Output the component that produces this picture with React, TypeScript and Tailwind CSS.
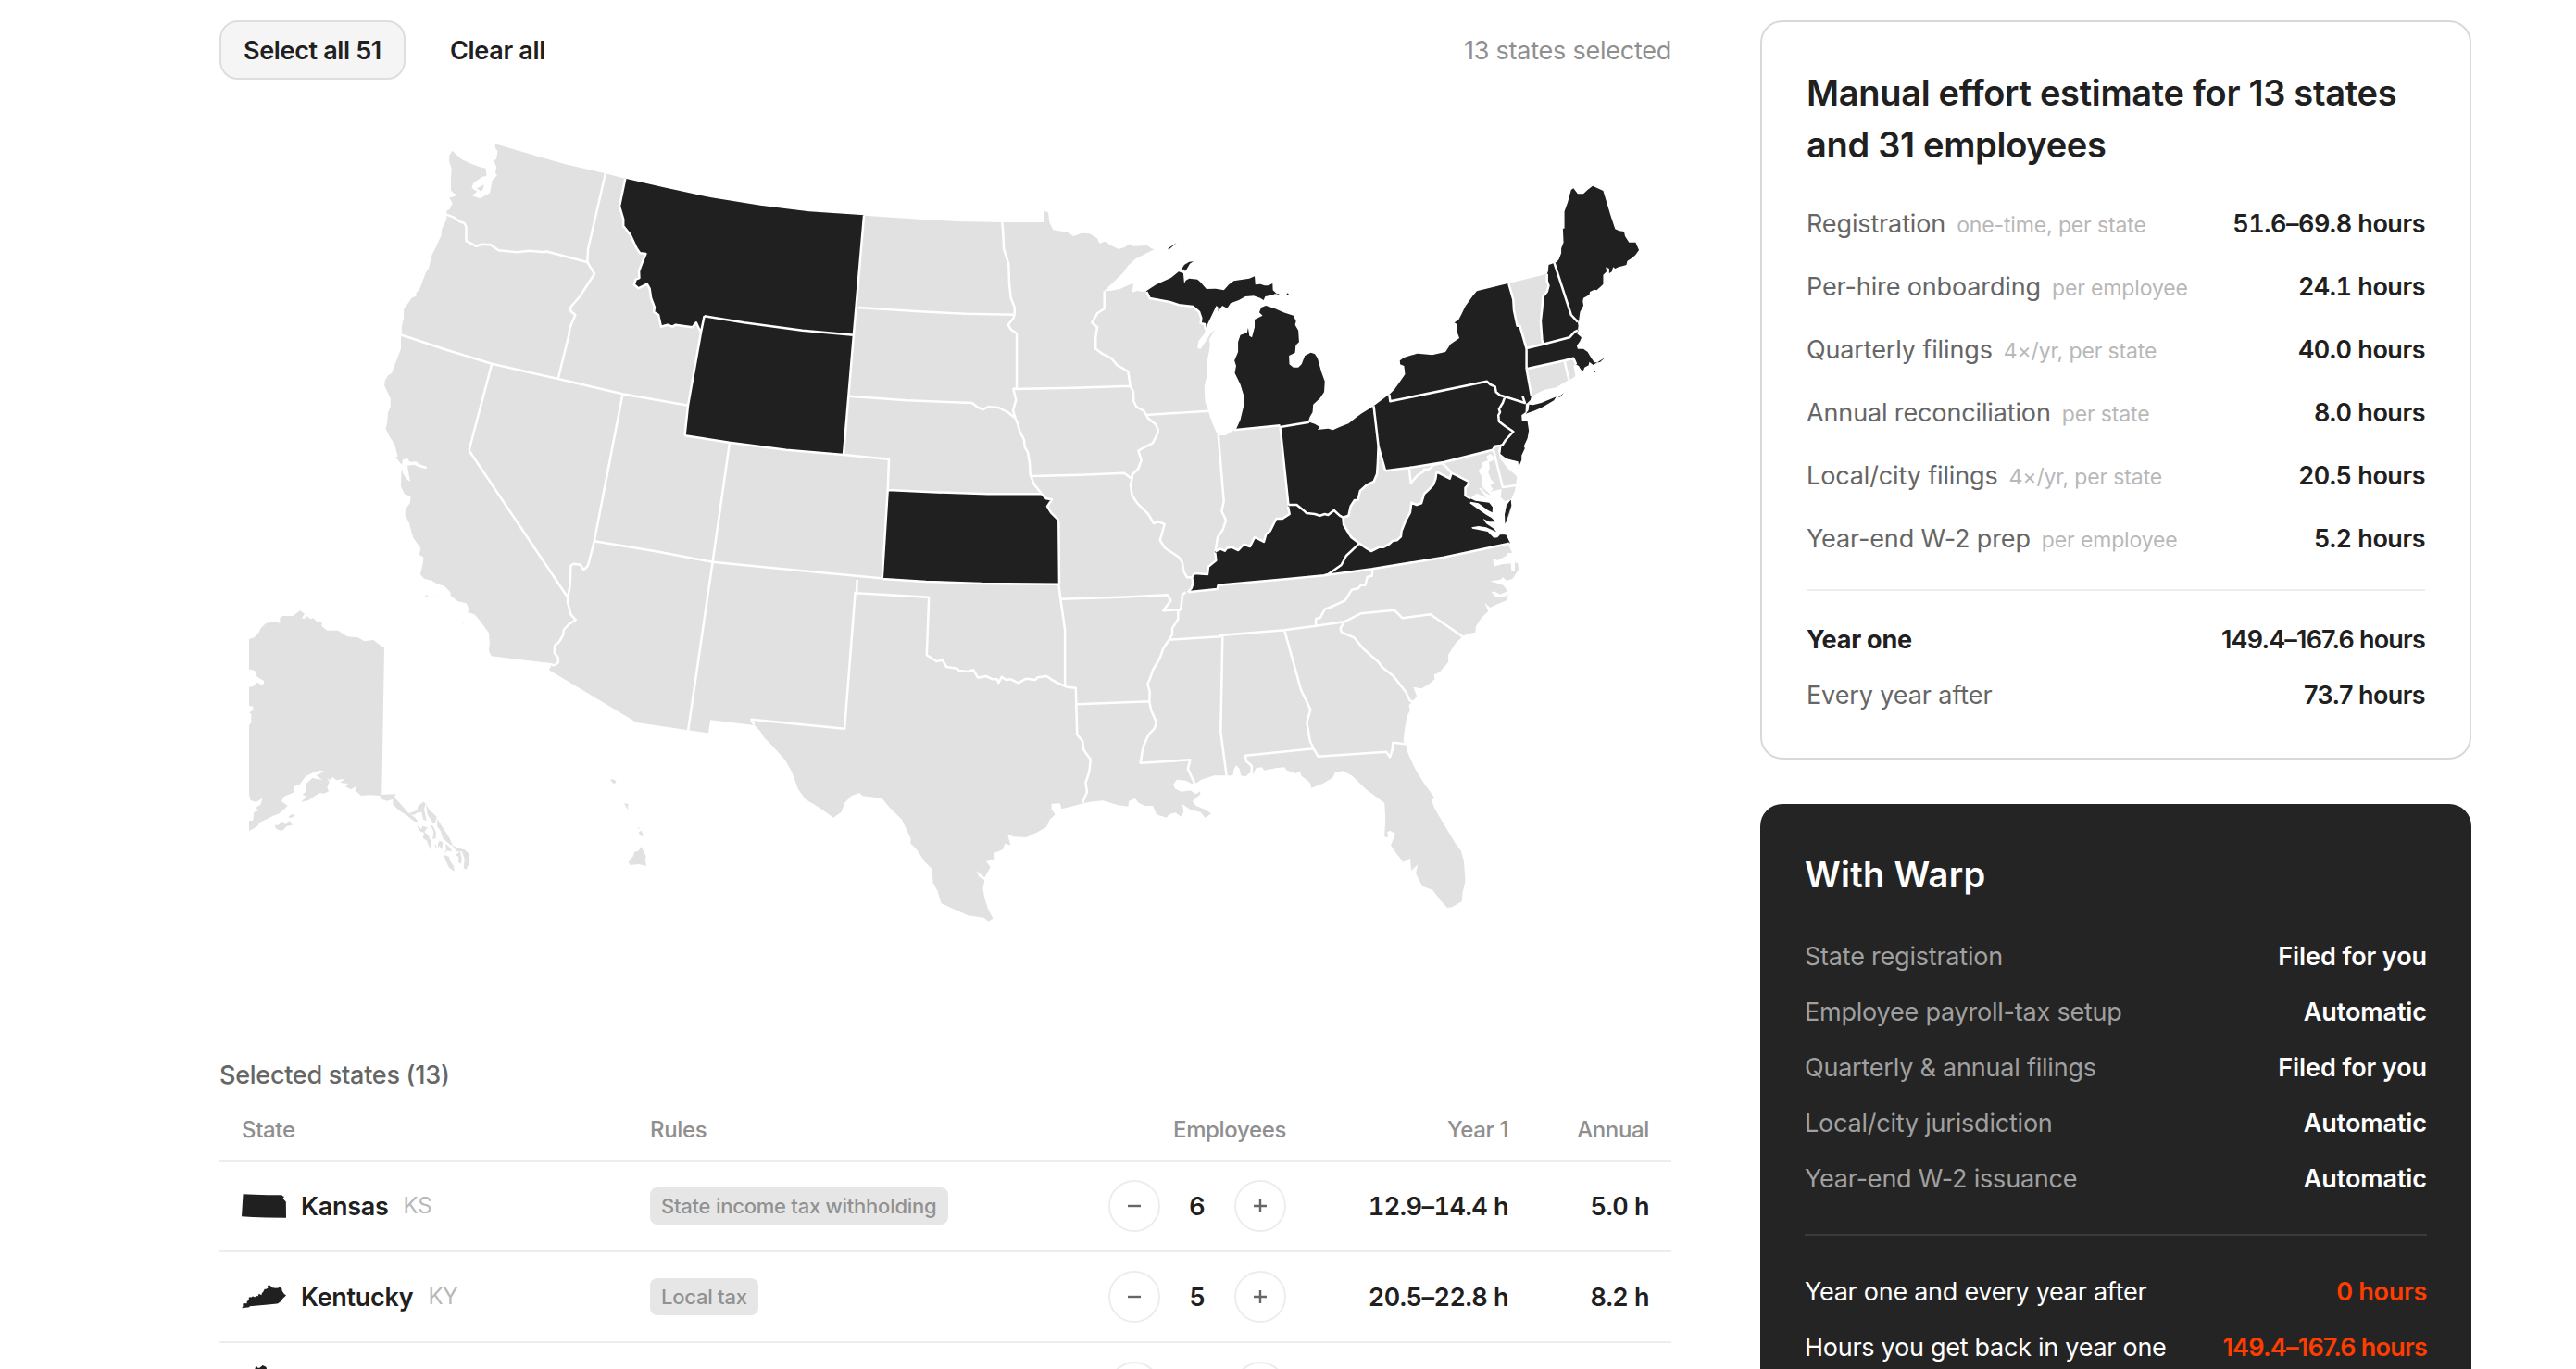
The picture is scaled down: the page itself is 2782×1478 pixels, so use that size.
import React from 'react'
import clsx from 'clsx'

type SheetId = 'nw' | 'mid' | 'ne' | 'sw' | 'se' | 'ak' | 'bay' | 'rio'
type Arc = [SheetId, string]
type Point = [number, number]

// Each sheet is a quantised grid: [x origin, y origin, x scale, y scale]
const SHEETS: Record<SheetId, [number, number, number, number]> = {
  nw: [400, 140, 2.851, 3],
  mid: [900, 200, 3, 3],
  ne: [1220, 180, 2.8, 3],
  sw: [400, 400, 2.8, 3],
  se: [900, 600, 2.063, 3],
  ak: [230, 640, 3, 3],
  bay: [1480, 440, 3, 3],
  rio: [0, 0, 1, 1],
}

const ARCS: Record<string, Arc> = {
  // coast, counter-clockwise from Cape Flattery
  waCoast: ['nw', '252,68 243,84 243,104 250,125 248,160 248,196 255,204 268,213 252,218 243,220 253,238 244,258 236,262 234,270'],
  orCoast: ['nw', '235,288 228,305 220,322 218,343 203,378 190,405 180,448 170,465 153,512 140,532 143,538 127,545 103,582 103,610 96,640 97,665'],
  caNorth: ['nw', '94,675 94,710 80,748 66,788 55,795 45,812 43,828 62,870 62,898 54,918 52,948 47,968 60,995 74,1018 84,1058'],
  caSouth: ['sw', '76,280 98,310 94,330 92,375 103,400 122,408 120,428 106,450 105,468 118,495 124,522 130,542 152,575 148,597 161,605 158,630 151,660 162,674 185,680 205,693 222,697 242,718 243,730 265,748 290,754 297,770 295,784 315,790 335,815 358,850 361,885 358,907 366,925 450,936 552,949'],
  azSouth: ['sw', '548,955 540,970 805,1140 960,1165 1022,1174 1028,1132 1155,1148 1160,1147 1180,1170 1190,1188 1215,1215 1253,1260'],
  bigBend: ['rio', '855,833 862,852 870,863 885,872'],
  txCoast: ['se', '0,848 18,830 25,800 40,778 58,768 65,778 108,785 125,815 153,855 172,915 172,932 185,950 203,990 220,1015 222,1060 232,1085 240,1125 270,1145 300,1165 335,1172 345,1184 356,1175 345,1145 337,1110 333,1078 337,1050 325,1040 318,1020 337,1042 350,1008 340,990 352,985 360,982 358,962 372,955 378,950 382,932 395,938 388,902 402,910 430,912 455,895 475,878 482,855 494,838 486,822 486,803 505,802 508,820 530,812 553,803'],
  laCoast: ['se', '570,797 600,793 635,808 657,812 658,795 672,785 680,800 695,810 712,810 720,838 742,848 748,838 762,832 775,845 780,830 778,805 795,822 818,830 828,848 842,835 828,822 808,810 800,795 818,772 815,755 805,740'],
  msAlCoast: ['se', '820,725 848,712 872,712 890,712 893,690 898,680 905,690 908,712 918,715 926,705 932,700'],
  flCoast: ['se', '935,708 942,688 955,685 960,695 985,688 1005,685 1010,695 1030,705 1040,698 1042,712 1062,735 1065,752 1090,738 1112,720 1118,702 1135,697 1155,712 1188,758 1228,800 1230,850 1228,910 1236,912 1234,895 1240,890 1252,900 1242,938 1255,965 1270,992 1285,980 1288,1020 1302,1000 1298,1030 1312,1070 1335,1082 1352,1115 1368,1140 1378,1138 1400,1120 1402,1090 1408,1055 1405,990 1398,955 1385,930 1340,820 1332,790 1340,785 1315,735 1298,695 1280,640 1275,610'],
  gaScCoast: ['se', '1270,600 1273,560 1278,520 1285,500 1282,485 1290,472 1300,455 1292,425 1310,430 1325,418 1340,400 1338,385 1350,378 1370,345 1370,320 1388,280 1402,262'],
  ncCoast: ['bay', '297,740 320,732 340,728 342,708 360,680 382,660 370,632 388,648 415,635 440,625 447,605 430,615 405,612 392,598 400,595 420,605 445,595 430,575 388,562 420,558 430,550 440,560 460,555 480,525 478,505 468,502 468,528 457,528 455,505 425,508 400,515 397,488 412,495 440,480 445,472 460,470 452,455 448,444'],
  delmarva: ['bay', '452,438 440,413 436,377 452,345 457,318 455,300 468,270 472,245 480,190'],
  njCoast: ['ne', '1177,970 1185,950 1185,935 1195,912 1192,905 1203,880 1207,855 1203,825 1186,822 1185,805 1197,795 1198,770'],
  nyHarbor: ['ne', '1200,768 1212,755 1215,742'],
  ctRiCoast: ['ne', '1218,743 1225,738 1255,722 1290,715 1325,692 1340,685 1348,678 1345,660 1342,645'],
  maCoast: ['ne', '1350,640 1358,645 1365,658 1372,660 1375,650 1388,643 1390,632 1402,642 1420,630 1438,617 1422,633 1405,634 1395,618 1385,600 1372,590 1355,590 1352,580 1362,565 1366,553 1352,540 1358,528'],
  nhCoast: ['ne', '1355,530 1357,515 1355,503'],
  meCoast: ['ne', '1358,500 1362,470 1372,450 1370,435 1372,425 1390,415 1392,405 1405,398 1412,400 1425,388 1432,380 1432,350 1442,340 1440,325 1450,330 1450,345 1458,340 1462,325 1468,330 1478,325 1490,322 1502,318 1505,305 1520,295 1530,285 1540,270 1530,245 1510,245 1498,225 1495,210 1480,208 1468,202 1455,160 1432,78 1400,62 1385,75 1372,88 1355,88 1342,70 1335,75 1325,115 1315,145 1315,200 1310,200 1312,245 1305,265 1305,280 1298,300 1290,310 1283,308'],
  nhTop: ['ne', '1283,312 1275,315 1267,318 1265,340'],
  vtTop: ['ne', '1262,347 1146,378'],
  nyCoast: ['ne', '1144,378 1050,403 1038,418 1015,452 1005,475 995,495 982,505 990,510 990,535 997,555 970,575 955,600 915,610 870,605 830,618 817,628 818,640 830,645 833,672 815,700 800,722 785,738'],
  paCoast: ['ne', '780,741 740,773'],
  ohCoast: ['ne', '735,777 700,800 685,812 662,832 635,843 615,853 600,848 568,852 575,843 560,833 543,827'],
  miLower: ['ne', '541,822 545,810 553,795 555,770 575,750 588,730 590,695 580,665 568,620 560,607 548,602 530,612 520,640 510,650 495,650 483,640 482,612 500,602 502,578 512,568 510,530 500,512 503,500 495,482 465,472 440,460 412,450 398,456 392,472 402,482 378,495 378,520 370,553 362,548 358,522 355,538 335,545 328,568 328,600 317,628 322,645 318,668 335,705 345,740 345,775 335,820 322,850'],
  inCoast: ['ne', '312,855 290,870 272,870 262,860 250,830 240,800'],
  wiMichigan: ['ne', '238,790 228,760 226,710 235,670 232,640 240,600 243,575 240,560 258,528 245,540 215,590 205,588 208,565 228,538 228,525'],
  miUpper: ['ne', '230,522 262,450 268,455 268,468 280,450 295,458 305,442 330,432 350,420 375,418 395,425 405,432 410,420 435,415 447,414 433,400 432,378 420,385 408,385 395,380 380,382 378,355 362,362 315,370 300,382 285,400 260,395 232,396 215,375 205,365 180,362 170,368 165,378 162,345 148,340 125,360 80,382 65,392 50,403'],
  wiSuperior: ['mid', '1005,345 985,342 968,347 972,318 960,322 930,335 900,342 878,342'],
  mnNorth: ['mid', '885,335 940,282 955,260 980,238 1040,207 1030,205 1018,195 970,197 960,190 945,200 925,207 900,195 880,182 862,188 855,172 830,157 805,155 778,165 760,153 712,145 700,120 696,88 684,84 684,120'],
  ndNorth: ['mid', '547,120 400,117 280,110 100,98'],
  mtNorth: ['nw', '1520,277 1350,265 1200,245 1050,220 900,186 785,158'],
  waNorth: ['nw', '724,142 600,112 500,82 384,46'],
  puget: ['nw', '385,60 392,70 388,95 380,100 388,120 385,140 390,148 375,165 368,205 350,215 338,223 312,213 330,200 320,195 312,188 318,172 345,152 358,150 355,125 335,120 305,108 280,95'],

  // shared borders
  waOr: ['nw', '230,273 240,277 255,283 275,298 290,303 295,315 295,360 325,377 345,371 370,373 395,391 450,397 490,392 535,397 540,394 668,429'],
  waId: ['nw', '724,142 670,388 668,429'],
  orId: ['nw', '668,429 690,467 645,540 616,575 617,588 631,600 615,640 610,670 578,807'],
  north42: ['nw', '97,665 230,712 374,758 578,807 776,856 978,893'],
  nvCaNorth: ['nw', '374,758 304,1038'],
  nvCaSouth: ['sw', '299,260 597,735'],
  nvUt: ['sw', '763,76 677,553 660,625 655,637 645,645 640,638 635,629 615,626 606,632 605,665 603,700 597,735'],
  caAz: ['sw', '597,735 596,750 606,790 621,808 600,822 585,840 582,858 570,880 558,890 556,915 567,928 568,945 560,953 548,955'],
  wyWest: ['nw', '1028,604 1018,655 978,893 968,991'],
  mtId: ['nw', '785,158 767,248 779,290 779,312 800,340 820,385 830,400 848,402 835,435 827,458 828,480 817,485 812,502 825,514 852,500 860,515 864,545 875,575 873,590 887,600 895,638 915,632 930,638 940,632 970,637 992,640 1003,625 1015,652 1018,655'],
  mtWy: ['nw', '1028,604 1150,625 1330,650 1488,665'],
  mtEast: ['nw', '1520,277 1488,665'],
  wyEast: ['nw', '1488,665 1457,1053'],
  wySouth: ['nw', '968,991 1105,1013 1280,1037 1457,1053'],
  coNe: ['mid', '33,873 180,887 176,987'],
  neKs: ['mid', '176,987 320,994 500,1000 675,1000'],
  coKs: ['mid', '176,987 158,1275'],
  utCo: ['sw', '1086,235 1035,620 961,1165'],
  north37: ['sw', '677,553 860,585 1035,620 1190,637 1350,653 1545,673'],
  ksSouth: ['mid', '158,1275 300,1284 480,1290 732,1292'],
  nmEast: ['sw', '1472,678 1470,720 1466,720 1434,1160 1152,1130 1160,1147'],
  okTx: ['se', '49,121 213,134 208,322 230,342 243,338 252,360 275,365 280,372 300,375 312,370 322,395 340,390 355,400 365,400 368,412 375,392 385,402 395,400 412,412 430,398 450,402 455,394 475,390 485,400 500,412 520,425 540,428 543,580 555,600 558,630 573,660 570,700 562,735 565,765 555,800'],
  okAr: ['se', '502,92 506,140 516,240 516,418'],
  moAr: ['se', '506,140 640,134 745,127 752,145 735,178 774,174'],
  arLa: ['se', '543,481 704,472'],
  ksMoRiver: ['mid', '675,1000 690,1015 708,1018 693,1040 705,1060 730,1085'],
  ksMo: ['mid', '730,1085 732,1292'],
  ndSd: ['mid', '80,396 280,409 430,416 587,419'],
  ndMn: ['mid', '547,120 550,155 552,205 568,255 570,320 575,365 587,395 587,419'],
  sdMn: ['mid', '587,419 582,432 566,452 575,467 594,480 594,658'],
  sdNe: ['mid', '50,683 240,697 450,705 465,718 485,726 500,718 535,720 565,735 590,755'],
  sdIa: ['mid', '594,658 583,660 592,695 582,730 590,755'],
  mnIa: ['mid', '583,660 780,656 962,650'],
  neIa: ['mid', '590,755 598,775 603,795 618,825 620,848 630,865 636,900 638,938 650,968 675,1000'],
  iaMo: ['mid', '640,942 800,938 942,932 968,952'],
  mnWi: ['mid', '878,342 878,400 855,415 838,445 855,460 850,490 850,530 875,548 900,560 920,583 955,603 962,650'],
  iaIl: ['mid', '962,650 972,670 973,700 982,718 1005,730 1020,755 1045,775 1052,792 1050,805 1035,835 1005,850 988,860 998,890 988,918 968,938 968,952'],
  wiIl: ['mid', '1012,744 1215,731'],
  moIl: ['mid', '968,952 962,970 968,1005 985,1030 1020,1065 1038,1095 1055,1090 1073,1098 1058,1150 1075,1175 1120,1205 1130,1220 1135,1250 1145,1270 1162,1270'],
  ilKy: ['mid', '1162,1270 1170,1257 1212,1260 1215,1235 1240,1215 1237,1190'],
  ilIn: ['mid', '1247,805 1265,1025 1258,1055 1272,1085 1262,1115 1245,1140 1238,1185'],
  kyIn: ['mid', '1238,1185 1255,1178 1268,1184 1275,1175 1290,1172 1312,1182 1330,1163 1350,1170 1365,1140 1395,1155 1402,1130 1415,1120 1435,1080 1455,1080 1478,1065 1473,1040'],
  kyOh: ['ne', '480,1095 505,1095 525,1112 535,1122 560,1125 575,1130 590,1125 600,1128 618,1113 635,1130 645,1136'],
  inOh: ['ne', '455,840 480,1095'],
  miIn: ['ne', '315,853 455,838'],
  ohNorth: ['ne', '543,827 455,843'],
  miWi: ['mid', '1015,345 1025,366 1090,378 1120,388 1165,393 1185,410 1192,430 1190,447 1203,450 1205,465'],
  kyWv: ['ne', '645,1136 647,1160 670,1200 695,1220'],
  kyVa: ['ne', '695,1220 655,1260 640,1290 600,1320 588,1324'],
  kyTn: ['ne', '588,1324 480,1335 268,1355 265,1368 175,1378'],
  kyMo: ['mid', '1162,1270 1165,1290 1160,1305 1148,1318'],
  tnVa: ['ne', '588,1324 733,1303 950,1265 1148,1220'],
  ohWv: ['ne', '645,1136 662,1130 668,1100 680,1080 690,1080 697,1050 718,1030 738,1020 748,995 750,960 752,905'],
  paWest: ['ne', '738,775 752,905 773,985'],
  paSouth: ['ne', '773,985 845,975 950,957 1098,917'],
  paDe: ['ne', '1098,917 1105,905 1122,903'],
  deMd: ['ne', '1100,917 1128,1038 1168,1032'],
  mdWv: ['ne', '845,975 850,1025 870,1000 888,988 890,980 905,980 920,965 945,960 960,975 972,990'],
  vaWv: ['ne', '695,1220 715,1235 730,1245 755,1232 768,1232 785,1222 795,1212 808,1210 820,1198 822,1180 835,1145 848,1120 852,1088 868,1095 882,1090 890,1060 905,1045 918,1030 925,1010 928,988'],
  mdVa: ['ne', '928,988 968,1010 973,992 990,1000 1025,1020 1022,1032 1015,1040 1015,1065 1030,1075'],
  vaShore: ['bay', '308,292 330,296 385,306 396,322 400,360 412,405 440,413 452,438'],
  paNy: ['ne', '785,738 788,760 1080,695 1090,705 1105,712 1108,730 1120,740 1135,745'],
  nyNj: ['ne', '1135,745 1195,765 1188,742'],
  paNj: ['ne', '1135,745 1128,765 1117,785 1120,795 1115,805 1117,825 1135,840 1160,858 1137,885 1128,900 1122,903'],
  njBay: ['ne', '1175,955 1150,950 1130,942 1120,930 1122,903'],
  nyVt: ['ne', '1146,378 1160,430 1162,465 1172,515 1180,515 1200,590'],
  nyMa: ['ne', '1200,590 1200,655'],
  nyCt: ['ne', '1200,655 1215,742'],
  maSouth: ['ne', '1200,655 1315,628 1342,620 1350,640'],
  vtMa: ['ne', '1200,588 1250,575'],
  nhMa: ['ne', '1250,575 1330,553 1345,535 1355,530'],
  vtNh: ['ne', '1262,347 1262,370 1267,385 1262,405 1250,420 1247,460 1243,500 1247,560 1250,575'],
  nhMe: ['ne', '1283,308 1335,480 1355,503'],
  ctRi: ['ne', '1315,628 1328,690'],
  mississippi: ['se', '785,118 778,125 774,174 768,180 768,205 755,235 755,255 748,272 735,300 728,330 712,370 705,400 700,415 705,440 704,472 708,500 720,540 715,560 702,580 690,620 684,671 795,661 790,690 805,738'],
  tnSouth: ['se', '748,272 862,262 862,258 1005,241 1075,227 1138,214'],
  tnNc: ['se', '1202,43 1200,65 1190,68 1185,95 1175,95 1170,105 1155,110 1140,145 1110,165 1095,173 1085,200 1075,205 1075,227'],
  msAl: ['se', '867,262 863,570 876,712'],
  alGa: ['se', '1005,241 1042,435 1063,498 1055,540 1062,600 1070,625'],
  alFl: ['se', '1070,625 918,647 920,665 932,680 932,705'],
  gaFl: ['se', '1070,625 1080,650 1232,635 1240,652 1245,630 1247,605 1275,610'],
  gaSc: ['se', '1138,214 1130,235 1132,247 1160,265 1180,300 1215,345 1222,360 1248,390 1275,440 1285,470 1292,472'],
  ncSc: ['se', '1138,214 1175,187 1250,176 1268,202 1330,190 1402,262'],

  // islands
  isleRoyale: ['ne', '115,268 120,262 142,246 120,267'],
  keweenaw: ['ne', '155,335 165,318 180,308 193,307 182,314 172,333 168,338 164,332'],
  drummond: ['ne', '472,416 478,409 482,415'],
  sault: ['ne', '435,412 450,412 456,416 440,417'],
  longIsland: ['ne', '1198,800 1206,788 1208,770 1220,772 1245,765 1290,745 1283,757 1250,778 1225,790 1205,797'],
  montauk: ['ne', '1295,748 1313,733 1303,745'],
  nantucket: ['ne', '1403,664 1408,661 1408,666'],
  vaEastern: ['bay', '455,300 457,318 448,345 440,370 436,377 435,345 440,318 448,302'],
  kitsap: ['nw', '328,190 350,178 346,195 340,200'],
  chan1: ['sw', '166,727 174,729 174,733 168,732'],
  chan2: ['sw', '192,730 196,731 193,734'],
  chan3: ['sw', '279,820 283,821 282,824'],
  alaska: ['ak', '117,150 133,145 148,130 155,115 172,98 210,92 213,98 220,96 215,85 225,75 260,75 282,57 297,68 288,82 296,84 305,75 315,85 325,82 335,92 353,95 352,108 370,122 405,122 420,132 435,142 470,145 490,157 520,153 535,165 555,178 547,653 540,657 510,655 480,657 460,640 467,625 447,637 430,628 437,618 412,615 427,602 400,607 388,597 378,607 370,600 377,613 370,630 375,643 360,650 345,648 310,672 285,678 303,660 290,653 300,645 300,620 322,600 355,607 335,592 360,578 345,575 325,582 300,595 280,622 262,627 265,645 230,660 222,675 242,690 215,715 195,722 150,745 145,755 117,772 117,738 130,738 133,710 150,705 138,697 155,685 160,665 140,678 122,672 117,655 117,430 124,420 124,392 117,388 130,380 130,368 117,365 117,305 130,303 145,290 155,298 165,295 165,285 148,275 137,265 142,257 130,250 117,248'],
  ak1: ['ak', '540,655 555,653 592,652 588,664 600,675 632,712 655,728 665,742 652,740 630,722 600,703 583,685 583,668 565,674 545,668'],
  ak2: ['ak', '635,715 660,705 665,690 682,677 689,682 684,700 692,738 682,735 676,710 662,712 650,720'],
  ak3: ['ak', '690,684 700,702 725,725 720,745 712,745 695,718'],
  ak4: ['ak', '727,733 765,792 778,820 768,815 745,795 738,772 726,755'],
  ak5: ['ak', '660,752 675,765 678,755 695,760 685,775 698,785 708,810 706,835 692,802 680,795 684,778 668,770'],
  ak6: ['ak', '704,748 715,758 722,775 722,795 712,798 715,775'],
  ak7: ['ak', '735,803 745,808 742,832 733,820 728,828 730,810'],
  ak8: ['ak', '752,812 768,825 775,838 758,835 750,848 756,828'],
  ak9: ['ak', '775,818 800,828 815,832 830,845 832,872 820,897 812,890 815,862 806,838 790,838'],
  ak10: ['ak', '748,848 765,855 768,868 780,885 782,902 765,890 755,870'],
  ak11: ['ak', '786,850 800,838 806,858 804,878 795,872 796,855'],
  ak12: ['ak', '718,812 726,825 720,823'],
  kodiak1: ['ak', '200,752 212,752 225,740 235,750 248,738 258,752 240,755 225,770 212,768 203,762'],
  kodiak2: ['ak', '243,726 255,718 267,720 254,729'],
  hi1: ['ak', '1287,604 1300,605 1307,612 1300,619 1292,613'],
  hi2: ['ak', '1332,682 1346,684 1344,695 1346,706 1338,693'],
  hi3: ['ak', '1380,775 1388,770 1396,788 1382,786'],
  hi4: ['ak', '1376,758 1382,764 1378,766'],
  hi5: ['ak', '1386,822 1397,840 1403,855 1400,865 1404,885 1380,879 1352,882 1346,872 1362,852 1365,840 1380,835'],

  // inlets
  chesapeake: ['bay', '440,411 420,412 412,421 400,422 380,402 350,396 330,392 328,388 350,384 375,388 408,403 400,392 375,376 365,360 385,370 405,370 392,357 375,347 345,326 322,310 325,305 350,310 380,332 395,340 396,322 385,308 340,302 325,295 330,288 345,278 376,292 352,262 358,260 372,276 390,285 385,278 366,262 360,245 362,225 350,205 362,190 362,178 380,172 376,158 388,150 398,158 398,170 383,178 387,195 382,210 390,232 402,245 388,252 398,265 388,272 425,264 422,290 435,303 455,298 440,318 435,345 436,377 442,400'],
  delawareBay: ['bay', '420,125 425,120 421,150 440,165 476,175 479,190 480,240 472,220 445,197 420,165 414,140'],
  sfBay: ['nw', '96,1088 100,1068 115,1066 122,1076 140,1075 152,1084 175,1092 172,1099 150,1093 135,1085 114,1088 118,1115 123,1140 110,1130 100,1112'],
  pontchartrain: ['se', '757,742 765,725 785,728 798,738 812,735 822,758 808,772 795,760 775,764 762,755'],
  mobileBay: ['se', '890,714 893,690 898,678 905,692 908,716'],
  canaveral: ['se', '1334,790 1345,800 1347,812 1340,806'],
}

const COAST = [
  'waCoast', 'orCoast', 'caNorth', 'caSouth', 'azSouth', 'bigBend', 'txCoast', 'laCoast', 'msAlCoast', 'flCoast',
  'gaScCoast', 'ncCoast', 'delmarva', 'njCoast', 'nyHarbor', 'ctRiCoast', 'maCoast', 'nhCoast', 'meCoast', 'nhTop',
  'vtTop', 'nyCoast', 'paCoast', 'ohCoast', 'miLower', 'inCoast', 'wiMichigan', 'miUpper', 'wiSuperior', 'mnNorth',
  'ndNorth', 'mtNorth', 'waNorth', 'puget',
]

const LAND = [
  COAST, ['alaska'], ['ak1'], ['ak2'], ['ak3'], ['ak4'], ['ak5'], ['ak6'], ['ak7'], ['ak8'], ['ak9'], ['ak10'],
  ['ak11'], ['ak12'], ['kodiak1'], ['kodiak2'], ['hi1'], ['hi2'], ['hi3'], ['hi4'], ['hi5'], ['kitsap'], ['chan1'],
  ['chan2'], ['chan3'],
]

const WATER = ['chesapeake', 'delawareBay', 'sfBay', 'pontchartrain', 'mobileBay', 'canaveral']

// A leading "-" walks the arc backwards
const SELECTED: Record<string, string[][]> = {
  KS: [['neKs', 'ksMoRiver', 'ksMo', '-ksSouth', '-coKs']],
  KY: [['kyOh', 'kyWv', 'kyVa', 'kyTn', '-kyMo', 'ilKy', 'kyIn']],
  ME: [['meCoast', 'nhMe']],
  MA: [['maCoast', '-nhMa', '-vtMa', 'nyMa', 'maSouth'], ['nantucket']],
  MI: [['miLower', 'miIn', '-ohNorth'], ['miUpper', 'miWi'], ['isleRoyale'], ['keweenaw'], ['drummond'], ['sault']],
  MT: [['mtNorth', 'mtId', 'mtWy', '-mtEast']],
  NH: [['nhCoast', '-nhMe', 'nhTop', 'vtNh', 'nhMa']],
  NJ: [['nyNj', '-njCoast', 'njBay', '-paNj']],
  NY: [['nyCoast', 'paNy', 'nyNj', 'nyHarbor', '-nyCt', '-nyMa', '-nyVt'], ['longIsland'], ['montauk']],
  OH: [['ohCoast', 'ohNorth', 'inOh', 'kyOh', 'ohWv']],
  PA: [['paCoast', 'paWest', 'paSouth', 'paDe', '-paNj', '-paNy']],
  VA: [['mdVa', 'vaShore', '-tnVa', '-kyVa', 'vaWv'], ['vaEastern']],
  WY: [['mtWy', 'wyEast', '-wySouth', '-wyWest']],
}

const BORDERS = [
  'waOr', 'waId', 'orId', 'north42', 'nvCaNorth', 'nvCaSouth', 'nvUt', 'caAz', 'wyWest', 'mtId', 'mtWy', 'mtEast',
  'wyEast', 'wySouth', 'coNe', 'neKs', 'coKs', 'utCo', 'north37', 'ksSouth', 'nmEast', 'okTx', 'okAr', 'moAr', 'arLa',
  'ksMoRiver', 'ksMo', 'ndSd', 'ndMn', 'sdMn', 'sdNe', 'sdIa', 'mnIa', 'neIa', 'iaMo', 'mnWi', 'iaIl', 'wiIl', 'moIl',
  'ilKy', 'ilIn', 'kyIn', 'kyOh', 'inOh', 'miIn', 'ohNorth', 'miWi', 'kyWv', 'kyVa', 'kyTn', 'kyMo', 'tnVa', 'ohWv',
  'paWest', 'paSouth', 'paDe', 'deMd', 'mdWv', 'vaWv', 'mdVa', 'paNy', 'nyNj', 'paNj', 'nyVt', 'nyMa', 'nyCt',
  'maSouth', 'vtMa', 'nhMa', 'vtNh', 'nhMe', 'ctRi', 'mississippi', 'tnSouth', 'tnNc', 'msAl', 'alGa', 'alFl', 'gaFl',
  'gaSc', 'ncSc',
]

const arcPoints = (ref: string): Point[] => {
  const reversed = ref.startsWith('-')
  const [sheet, raw] = ARCS[reversed ? ref.slice(1) : ref]
  const [ox, oy, sx, sy] = SHEETS[sheet]
  const points = raw.split(' ').map((pair): Point => {
    const [x, y] = pair.split(',').map(Number)
    return [ox + x / sx, oy + y / sy]
  })
  return reversed ? points.reverse() : points
}

const line = (points: Point[]) => 'M' + points.map(([x, y]) => `${x.toFixed(1)} ${y.toFixed(1)}`).join('L')
const shape = (rings: string[][]) => rings.map((ring) => line(ring.flatMap(arcPoints)) + 'Z').join('')

const UsMap: React.FC = () => (
  <svg viewBox="237 120 1568 900" className="mt-[34px] block h-[900px] w-[1568px]">
    <path d={shape(LAND)} className="fill-[#e1e1e1]" />
    {Object.keys(SELECTED).map((code) => (
      <path key={code} d={shape(SELECTED[code])} className="fill-[#202020]" />
    ))}
    <path d={shape(WATER.map((name) => [name]))} className="fill-white" />
    <path
      d={BORDERS.map((name) => line(arcPoints(name))).join('')}
      className="fill-none stroke-white stroke-[2.5]"
      strokeLinejoin="round"
    />
  </svg>
)

const StateIcon: React.FC<{ code: string }> = ({ code }) => {
  const points = SELECTED[code].flatMap((ring) => ring.flatMap(arcPoints))
  const xs = points.map((p) => p[0])
  const ys = points.map((p) => p[1])
  const x = Math.min(...xs)
  const y = Math.min(...ys)

  return (
    <svg viewBox={`${x} ${y} ${Math.max(...xs) - x} ${Math.max(...ys) - y}`} className="size-12 shrink-0">
      <path d={shape(SELECTED[code])} className="fill-[#202020]" />
    </svg>
  )
}

const Stepper: React.FC<{ value?: number }> = ({ value }) => {
  const button = 'flex size-14 items-center justify-center rounded-full border-2 border-[#ededed]'

  return (
    <div className="flex items-center justify-end">
      <button className={button} aria-label="Remove employee">
        <svg viewBox="0 0 14 14" className="size-3.5 stroke-[#666] stroke-[2.4]">
          <path d="M0 7h14" />
        </svg>
      </button>
      <span className="w-20 pt-0.5 text-center text-[27px] font-semibold">{value}</span>
      <button className={button} aria-label="Add employee">
        <svg viewBox="0 0 14 14" className="size-3.5 stroke-[#666] stroke-[2.4]">
          <path d="M0 7h14M7 0v14" />
        </svg>
      </button>
    </div>
  )
}

const COLUMNS = 'grid grid-cols-[441px_455px_232px_240px_152px] items-center border-b-2 border-[#ededed] px-6'
const VALUE = 'pt-[3px] text-right text-[27px] font-semibold tracking-[-0.018em] tabular-nums'

const rows = [
  { code: 'KS', name: 'Kansas', rule: 'State income tax withholding', employees: 6, year: '12.9–14.4 h', annual: '5.0 h' },
  { code: 'KY', name: 'Kentucky', rule: 'Local tax', employees: 5, year: '20.5–22.8 h', annual: '8.2 h' },
]

const SelectedStates: React.FC = () => (
  <section className="mt-[121px]">
    <h2 className="h-10 text-[27px] leading-10 font-medium tracking-[-0.01em] text-[#666]">Selected states (13)</h2>
    <div className={clsx(COLUMNS, 'mt-[7px] h-[66px] text-2xl font-medium tracking-[-0.015em] text-[#8f8f8f]')}>
      <span>State</span>
      <span>Rules</span>
      <span className="text-right">Employees</span>
      <span className="text-right">Year 1</span>
      <span className="text-right">Annual</span>
    </div>
    {rows.map((row) => (
      <div key={row.code} className={clsx(COLUMNS, 'h-[98px]')}>
        <div className="flex items-center">
          <StateIcon code={row.code} />
          <span className="ml-4 pt-0.5 text-[27px] font-semibold tracking-[-0.01em]">{row.name}</span>
          <span className="ml-4 text-2xl tracking-[-0.01em] text-[#b8b8b8]">{row.code}</span>
        </div>
        <div className="flex">
          <span className="flex h-10 items-center rounded-lg bg-[#e6e6e6] px-3 text-[22px] font-medium tracking-[-0.011em] text-[#919191]">
            {row.rule}
          </span>
        </div>
        <Stepper value={row.employees} />
        <span className={VALUE}>{row.year}</span>
        <span className={VALUE}>{row.annual}</span>
      </div>
    ))}
    <div className={clsx(COLUMNS, 'h-[98px]')}>
      <StateIcon code="ME" />
      <span />
      <Stepper />
    </div>
  </section>
)

const manual = [
  { label: 'Registration', note: 'one-time, per state', hours: '51.6–69.8 hours' },
  { label: 'Per-hire onboarding', note: 'per employee', hours: '24.1 hours' },
  { label: 'Quarterly filings', note: '4×/yr, per state', hours: '40.0 hours' },
  { label: 'Annual reconciliation', note: 'per state', hours: '8.0 hours' },
  { label: 'Local/city filings', note: '4×/yr, per state', hours: '20.5 hours' },
  { label: 'Year-end W-2 prep', note: 'per employee', hours: '5.2 hours' },
]

const ManualEffort: React.FC = () => (
  <section className="h-[798px] rounded-3xl border-2 border-[#d9d9d9] px-12 pt-12 text-[27px]">
    <h2 className="text-[38px] leading-14 font-semibold tracking-[-0.008em]">
      Manual effort estimate for 13 states
      <br />
      and 31 employees
    </h2>
    <div className="mt-6">
      {manual.map((item) => (
        <div key={item.label} className="flex h-[68px] items-center justify-between">
          <span className="flex items-baseline tracking-[-0.005em] text-[#666]">
            {item.label}
            <span className="ml-3 text-[23px] text-[#b8b8b8]">{item.note}</span>
          </span>
          <span className="font-semibold tracking-[-0.018em] tabular-nums">{item.hours}</span>
        </div>
      ))}
    </div>
    <div className="mt-5 border-t-2 border-[#ededed] pt-[23px]">
      <div className="flex h-15 items-center justify-between">
        <span className="font-bold tracking-[-0.008em]">Year one</span>
        <span className="font-semibold tracking-[-0.03em]">149.4–167.6 hours</span>
      </div>
      <div className="flex h-15 items-center justify-between">
        <span className="tracking-[-0.004em] text-[#666]">Every year after</span>
        <span className="font-semibold tracking-[-0.023em]">73.7 hours</span>
      </div>
    </div>
  </section>
)

const warp = [
  ['State registration', 'Filed for you'],
  ['Employee payroll-tax setup', 'Automatic'],
  ['Quarterly & annual filings', 'Filed for you'],
  ['Local/city jurisdiction', 'Automatic'],
  ['Year-end W-2 issuance', 'Automatic'],
]

const WithWarp: React.FC = () => (
  <section className="mt-12 h-[664px] rounded-3xl bg-[#242424] px-12 pt-12 text-[27px] text-white">
    <h2 className="text-[38px] leading-14 font-semibold tracking-[0.008em]">With Warp</h2>
    <div className="mt-[31px]">
      {warp.map(([label, value]) => (
        <div key={label} className="flex h-15 items-center justify-between">
          <span className="tracking-[-0.008em] text-[#a0a0a0]">{label}</span>
          <span className="font-semibold tracking-[-0.003em]">{value}</span>
        </div>
      ))}
    </div>
    <div className="mt-[29px] border-t-2 border-[#3a3a3a] pt-[31px]">
      <div className="flex h-15 items-center justify-between">
        <span className="tracking-[-0.01em]">Year one and every year after</span>
        <span className="font-semibold tracking-[-0.01em] text-[#ff3d00]">0 hours</span>
      </div>
      <div className="flex h-15 items-center justify-between">
        <span className="tracking-[-0.01em]">Hours you get back in year one</span>
        <span className="font-semibold tracking-[-0.029em] text-[#ff3d00]">149.4–167.6 hours</span>
      </div>
    </div>
  </section>
)

const App: React.FC = () => {
  return (
    <main className="flex h-[1478px] w-[2782px] overflow-hidden bg-white pt-[22px] pl-[237px] font-['Inter',sans-serif] text-[#202020]">
      <div className="w-[1568px] shrink-0">
        <div className="flex h-16 items-center text-[27px]">
          <button className="h-full rounded-[20px] border-2 border-[#dedede] bg-[#f5f5f5] px-6 pt-0.5 font-semibold tracking-[-0.013em]">
            Select all 51
          </button>
          <button className="ml-12 pt-0.5 font-semibold tracking-[-0.011em]">Clear all</button>
          <span className="ml-auto pt-0.5 tracking-[-0.009em] text-[#8f8f8f]">13 states selected</span>
        </div>
        <UsMap />
        <SelectedStates />
      </div>
      <div className="ml-24 w-[768px] shrink-0">
        <ManualEffort />
        <WithWarp />
      </div>
    </main>
  )
}

export default App
